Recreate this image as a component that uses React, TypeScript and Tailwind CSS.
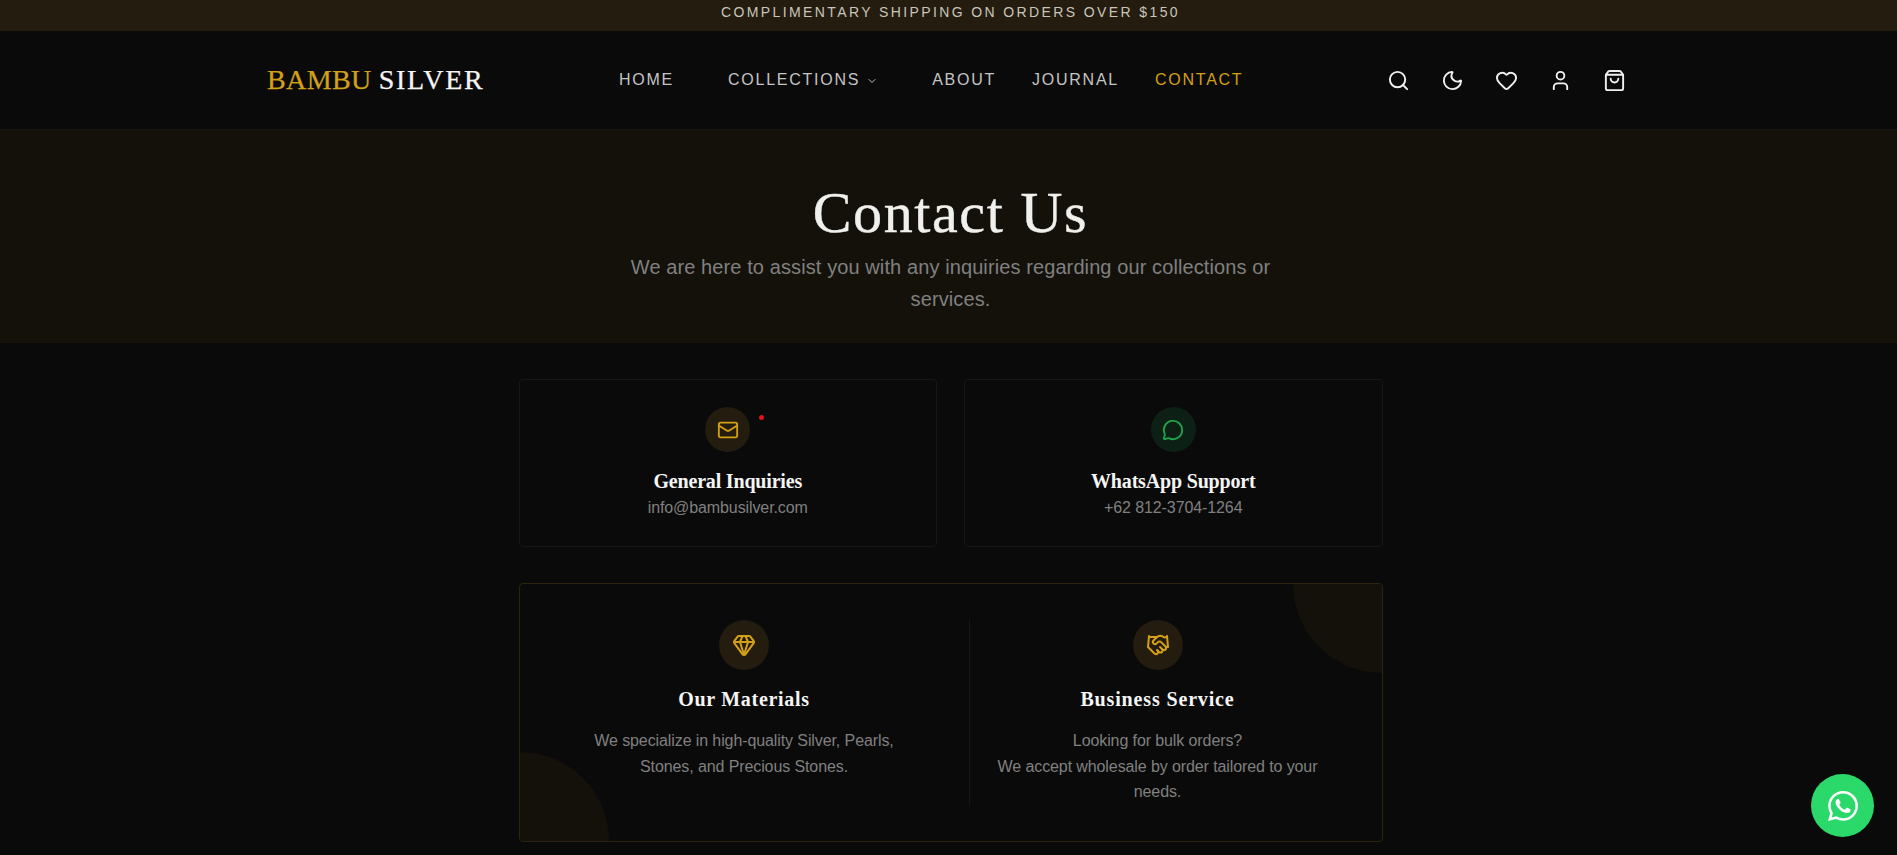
import { ChevronDown, Search, Moon, Heart, User, ShoppingBag, Mail, MessageCircle, Gem, Handshake } from "lucide-react"

const navItems = ["HOME", "ABOUT", "JOURNAL"]

function WhatsAppIcon() {
  return (
    <svg viewBox="0 0 24 24" className="h-[30px] w-[30px] fill-white">
      <path d="M17.472 14.382c-.297-.149-1.758-.867-2.03-.967-.273-.099-.471-.148-.67.15-.197.297-.767.966-.94 1.164-.173.199-.347.223-.644.075-.297-.15-1.255-.463-2.39-1.475-.883-.788-1.48-1.761-1.653-2.059-.173-.297-.018-.458.13-.606.134-.133.298-.347.446-.52.149-.174.198-.298.298-.497.099-.198.05-.371-.025-.52-.075-.149-.669-1.612-.916-2.207-.242-.579-.487-.5-.669-.51-.173-.008-.371-.01-.57-.01-.198 0-.52.074-.792.372-.272.297-1.04 1.016-1.04 2.479 0 1.462 1.065 2.875 1.213 3.074.149.198 2.096 3.2 5.077 4.487.709.306 1.262.489 1.694.625.712.227 1.36.195 1.871.118.571-.085 1.758-.719 2.006-1.413.248-.694.248-1.289.173-1.413-.074-.124-.272-.198-.57-.347m-5.421 7.403h-.004a9.87 9.87 0 01-5.031-1.378l-.361-.214-3.741.982.998-3.648-.235-.374a9.86 9.86 0 01-1.51-5.26c.001-5.45 4.436-9.884 9.888-9.884 2.64 0 5.122 1.03 6.988 2.898a9.825 9.825 0 012.893 6.994c-.003 5.45-4.437 9.884-9.885 9.884m8.413-18.297A11.815 11.815 0 0012.05 0C5.495 0 .16 5.335.157 11.892c0 2.096.547 4.142 1.588 5.945L.057 24l6.305-1.654a11.882 11.882 0 005.683 1.448h.005c6.554 0 11.89-5.335 11.893-11.893a11.821 11.821 0 00-3.48-8.413z" />
    </svg>
  )
}

function ContactCard({ icon, circle, title, value, dot }: { icon: React.ReactNode; circle: string; title: string; value: string; dot?: boolean }) {
  return (
    <div className="relative flex h-[168px] flex-col items-center rounded border border-[#171717] pt-[27px]">
      <div className={`flex h-[45px] w-[45px] items-center justify-center rounded-full ${circle}`}>{icon}</div>
      {dot && <span className="absolute left-[239px] top-[35px] h-[5px] w-[5px] rounded-full bg-[#e01414]" />}
      <h3 className="mt-[15px] font-['Liberation_Serif',serif] text-[20px] font-bold leading-[28px] tracking-[-0.18px] text-[#f5f5f5]">{title}</h3>
      <p className="mt-[1px] text-[16px] leading-[24px] tracking-[-0.1px] text-[#808080]">{value}</p>
    </div>
  )
}

export default function App() {
  return (
    <div className="h-[855px] overflow-hidden bg-[#0a0a0a] pl-1 font-['Liberation_Sans',sans-serif]">
      {/* Announcement */}
      <div className="-ml-1 flex h-[31px] items-center justify-center bg-[#231c0f] pb-[7px] pl-1 text-[14px] tracking-[2.39px] text-[#c9c5bb]">
        COMPLIMENTARY SHIPPING ON ORDERS OVER $150
      </div>

      {/* Header */}
      <header className="-ml-1 flex h-[99px] items-center border-b border-[#161616] pl-[267px]">
        <div className="w-[352px] font-['Liberation_Serif',serif] text-[28px] text-[#f5f5f5] [-webkit-text-stroke:0.25px]">
          <span className="tracking-[0.4px] text-[#d4a017]">BAMBU</span> <span className="tracking-[1.7px]">SILVER</span>
        </div>
        <nav className="flex w-[768px] items-center pb-[1px] text-[16px] tracking-[1.75px] text-[#c4c4c4]">
          <a>{navItems[0]}</a>
          <a className="mx-[54px] flex items-center gap-[6px]">
            COLLECTIONS <ChevronDown className="mt-[3px] h-[12px] w-[12px]" />
          </a>
          <a>{navItems[1]}</a>
          <a className="ml-[36px]">{navItems[2]}</a>
          <a className="ml-[36px] text-[#d4a017]">CONTACT</a>
        </nav>
        <div className="flex items-center gap-[31px] text-[#f0f0f0]">
          <Search className="h-[23px] w-[23px]" />
          <Moon className="h-[23px] w-[23px]" />
          <Heart className="h-[23px] w-[23px]" />
          <User className="h-[23px] w-[23px]" />
          <ShoppingBag className="h-[23px] w-[23px]" />
        </div>
      </header>

      {/* Hero */}
      <section className="-ml-1 flex h-[213px] flex-col items-center bg-[#14110b] pl-1 pt-[51px]">
        <h1 className="font-['Liberation_Serif',serif] text-[58px] leading-[64px] tracking-[1.6px] text-[#f0f0ec] [-webkit-text-stroke:0.4px]">Contact Us</h1>
        <p className="mt-[6px] w-[680px] text-center text-[20px] leading-[32px] tracking-[0.1px] text-[#808080]">
          We are here to assist you with any inquiries regarding our collections or services.
        </p>
      </section>

      <main className="mx-auto w-[864px] pt-[36px]">
        <div className="grid grid-cols-2 gap-[27px]">
          <ContactCard icon={<Mail className="h-[22px] w-[22px] text-[#d4a017]" />} circle="bg-[#231c0f]" title="General Inquiries" value="info@bambusilver.com" dot />
          <ContactCard icon={<MessageCircle className="h-[22px] w-[22px] text-[#22a34a]" />} circle="bg-[#0d2015]" title="WhatsApp Support" value="+62 812-3704-1264" />
        </div>

        <div className="relative mt-[36px] grid h-[259px] grid-cols-2 gap-[36px] overflow-hidden rounded border border-[#2d2410] p-[36px]">
          <div className="absolute -left-[89px] -bottom-[89px] h-[178px] w-[178px] rounded-full bg-[#14110b]" />
          <div className="absolute -right-[89px] -top-[89px] h-[178px] w-[178px] rounded-full bg-[#14110b]" />

          <div className="relative flex flex-col items-center px-6 text-center">
            <div className="flex h-[50px] w-[50px] shrink-0 items-center justify-center rounded-full bg-[#231c0f]">
              <Gem className="h-[24px] w-[24px] text-[#d4a017]" />
            </div>
            <h3 className="mt-[15px] font-['Liberation_Serif',serif] text-[20px] font-bold leading-[28px] tracking-[0.7px] text-[#f5f5f5]">Our Materials</h3>
            <p className="mt-[15px] text-[16px] leading-[25.6px] tracking-[-0.1px] text-[#808080]">
              We specialize in high-quality Silver, Pearls, Stones, and Precious Stones.
            </p>
          </div>

          <div className="relative flex h-[185px] flex-col items-center border-l border-[#171717] px-6 text-center">
            <div className="flex h-[50px] w-[50px] shrink-0 items-center justify-center rounded-full bg-[#231c0f]">
              <Handshake className="h-[24px] w-[24px] text-[#d4a017]" />
            </div>
            <h3 className="mt-[15px] font-['Liberation_Serif',serif] text-[20px] font-bold leading-[28px] tracking-[0.85px] text-[#f5f5f5]">Business Service</h3>
            <p className="mt-[15px] text-[16px] leading-[25.6px] tracking-[-0.1px] text-[#808080]">
              Looking for bulk orders?
              <br />
              We accept wholesale by order tailored to your needs.
            </p>
          </div>
        </div>
      </main>

      <button className="fixed bottom-[18px] right-[23px] flex h-[63px] w-[63px] items-center justify-center rounded-full bg-[#2bd96b]">
        <WhatsAppIcon />
      </button>
    </div>
  )
}
